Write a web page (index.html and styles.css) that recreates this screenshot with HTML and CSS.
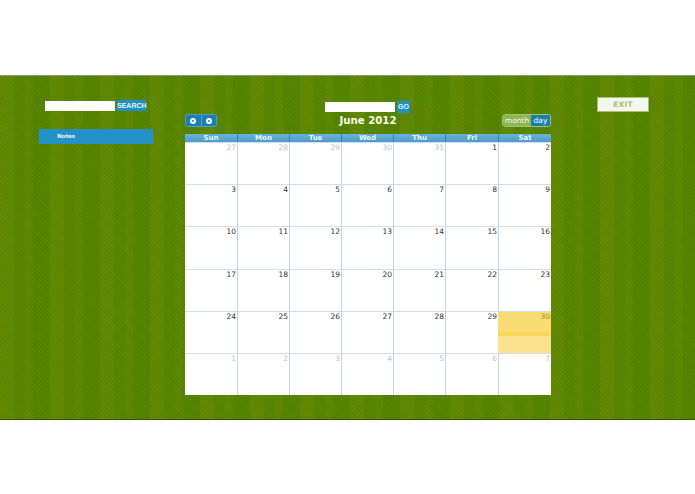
FILE: index.html
```html
<!DOCTYPE html>
<html lang="en">
<head>
<meta charset="utf-8">
<title>Calendar</title>
<link rel="stylesheet" href="styles.css">
</head>
<body>
<main class="band">
  <aside class="sidebar">
    <form class="search search-left">
      <input class="search-input" type="text" aria-label="Search">
      <button class="search-btn" type="button">SEARCH</button>
    </form>
    <nav class="notes">Notes</nav>
  </aside>
  <section class="center">
    <form class="search search-center">
      <input class="search-input" type="text" aria-label="Go">
      <button class="search-btn go" type="button">GO</button>
    </form>
    <div class="toolbar">
      <div class="seg seg-nav">
        <button class="nav-btn" type="button" aria-label="Previous"><span class="ring"></span></button>
        <button class="nav-btn" type="button" aria-label="Next"><span class="ring"></span></button>
      </div>
      <h1 class="title">June 2012</h1>
      <div class="seg seg-view">
        <button class="view month" type="button">month</button>
        <button class="view day" type="button">day</button>
      </div>
    </div>
    <div class="calendar">
      <div class="head">Sun</div><div class="head">Mon</div><div class="head">Tue</div><div class="head">Wed</div><div class="head">Thu</div><div class="head">Fri</div><div class="head">Sat</div>
      <div class="cell other">27</div><div class="cell other">28</div><div class="cell other">29</div><div class="cell other">30</div><div class="cell other">31</div><div class="cell">1</div><div class="cell">2</div>
      <div class="cell">3</div><div class="cell">4</div><div class="cell">5</div><div class="cell">6</div><div class="cell">7</div><div class="cell">8</div><div class="cell">9</div>
      <div class="cell">10</div><div class="cell">11</div><div class="cell">12</div><div class="cell">13</div><div class="cell">14</div><div class="cell">15</div><div class="cell">16</div>
      <div class="cell">17</div><div class="cell">18</div><div class="cell">19</div><div class="cell">20</div><div class="cell">21</div><div class="cell">22</div><div class="cell">23</div>
      <div class="cell">24</div><div class="cell">25</div><div class="cell">26</div><div class="cell">27</div><div class="cell">28</div><div class="cell">29</div><div class="cell today">30</div>
      <div class="cell other">1</div><div class="cell other">2</div><div class="cell other">3</div><div class="cell other">4</div><div class="cell other">5</div><div class="cell other">6</div><div class="cell other">7</div>
    </div>
  </section>
  <aside class="right">
    <button class="exit" type="button">EXIT</button>
  </aside>
</main>
</body>
</html>
```
FILE: styles.css
```css
* { box-sizing: border-box; }
html, body { margin: 0; padding: 0; background: #fff; }
body { height: 494px; overflow: hidden; padding-top: 75px; font-family: "DejaVu Sans", sans-serif; }

.band {
  height: 345px;
  display: flex;
  align-items: flex-start;
  padding-left: 39px;
  border-top: 1px solid #8a9a72;
  border-bottom: 1px solid #3c5200;
  background-color: #5a8600;
  background-image:
    repeating-linear-gradient(45deg, rgba(255,255,255,.025) 0 1px, transparent 1px 3px),
    repeating-linear-gradient(-45deg, rgba(0,0,0,.025) 0 1px, transparent 1px 3px),
    repeating-linear-gradient(90deg, rgba(120,140,0,.14) 0 14px, rgba(50,110,0,.1) 14px 25px, rgba(110,130,0,.08) 25px 33px, rgba(40,105,0,.12) 33px 50px);
}

.sidebar { width: 114px; margin-top: 24px; }
.search { display: flex; align-items: center; gap: 2px; }
.search-left { padding-left: 6px; }
.search-input { width: 70px; height: 10px; padding: 0; border: 0; background: #fff; }
.search-btn {
  height: 11px; width: 29px; padding: 0; border: 0;
  background: #1f8fc4; color: #e6f4fa;
  font: bold 7px/11px "Liberation Sans", sans-serif;
  text-align: center;
}
.notes {
  margin-top: 18px; height: 15px; padding: 3px 0 0 18px;
  background: #2191c6; color: #f2f8fb;
  font: bold 5.5px/8px "DejaVu Sans", sans-serif;
}

.center { width: 366px; margin-left: 32px; margin-top: 25px; }
.search-center { justify-content: center; padding-right: 1px; height: 12px; }
.search-center .go { height: 12px; width: 13px; padding: 0; line-height: 12px; }

.toolbar { display: grid; grid-template-columns: 1fr auto 1fr; align-items: center; height: 13px; margin-top: 1px; }
.title { margin: 0; color: #fbfbe8; font: bold 10.2px/13px "DejaVu Sans", sans-serif; }
.seg { display: flex; height: 13px; border: 1px solid #4f9ec0; border-radius: 3px; overflow: hidden; }
.seg-nav { width: 32px; }
.nav-btn { flex: 1; padding: 0; border: 0; background: #1c7fb4; display: flex; align-items: center; justify-content: center; }
.nav-btn + .nav-btn { border-left: 1px solid #5aa4c8; }
.ring { width: 6px; height: 6px; border-radius: 50%; border: 2px solid #f2f9fc; }
.seg-view { width: 49px; justify-self: end; border-color: #a0c66c; }
.view { padding: 0; border: 0; font: 7.5px/11px "DejaVu Sans", sans-serif; color: #f3f8ea; }
.month { flex: 0 0 28px; background: #8db653; }
.day { flex: 1; background: #1c7fb4; }

.calendar {
  display: grid;
  grid-template-columns: 52px 52px 52px 52px 52px 53px 53px;
  grid-template-rows: 8px 42px 42px 43px 42px 42px 42px;
  margin-top: 7px;
  background: #fff;
}
.head {
  background: linear-gradient(#6cb2d6, #4b9dca);
  border-left: 1px solid #2f86b4;
  color: #eaf5fa;
  font: bold 7px/8px "DejaVu Sans", sans-serif;
  text-align: center;
}
.head:first-child { border-left: 0; }
.cell {
  padding: 1px 1px 0 0;
  border-top: 1px solid #cfdfee;
  border-left: 1px solid #bcd3e8;
  color: #333;
  font: 7.5px/8px "DejaVu Sans", sans-serif;
  text-align: right;
}
.cell:nth-child(7n+1) { border-left: 0; }
.other { color: #bcc2c8; }
.today {
  color: #b08a2a;
  border-left: 0;
  background: linear-gradient(#f9dc73 0 20px, #f8d660 20px 24px, #fbe28f 24px);
}

.right { margin-left: 46px; margin-top: 21px; }
.exit {
  display: block; width: 52px; height: 15px; padding: 0;
  border: 1px solid #a5c56a;
  background: #f7f7f2; color: #a4c46c;
  font: bold 7.5px/13px "DejaVu Sans", sans-serif;
  letter-spacing: .3px;
}
```
